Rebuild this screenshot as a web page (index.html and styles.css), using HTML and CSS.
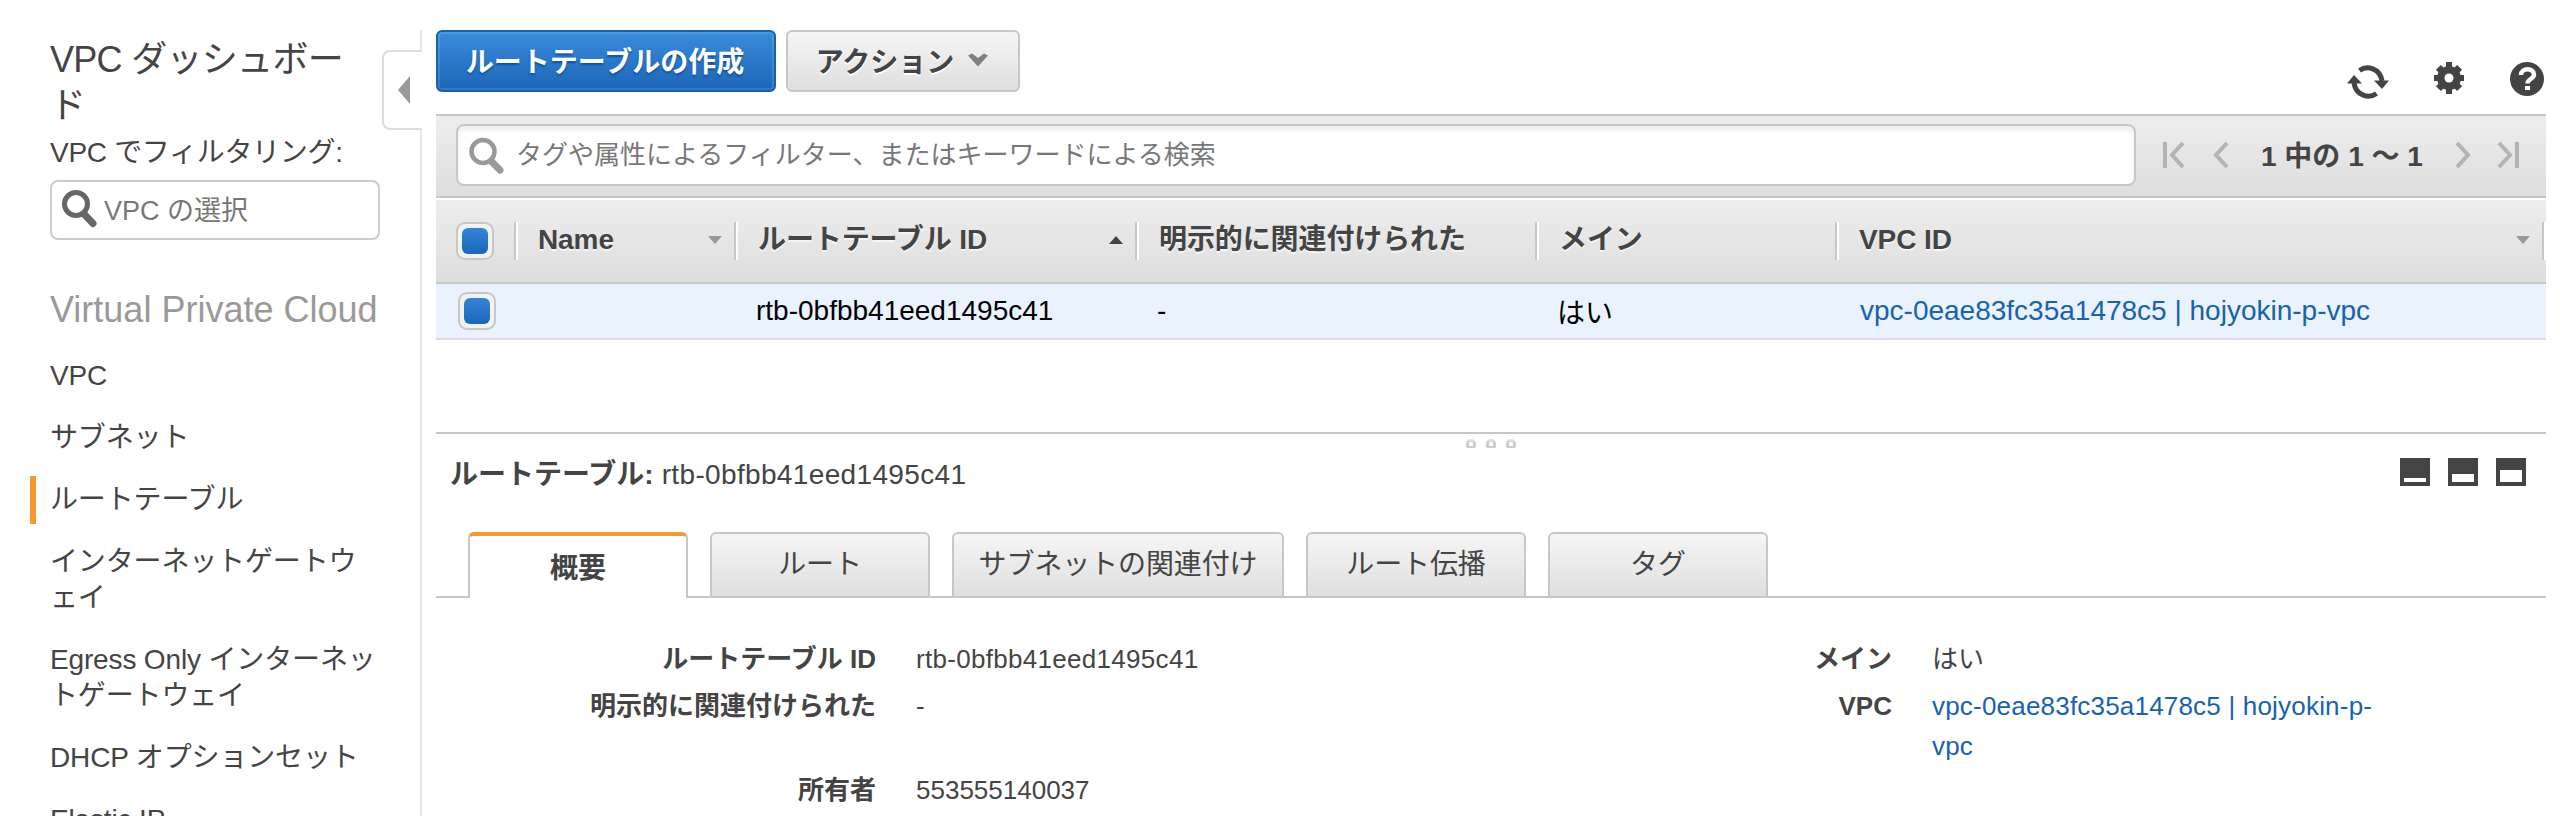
FILE: index.html
```html
<!DOCTYPE html>
<html lang="ja">

<head>
  <meta charset="UTF-8">
  <meta name="viewport" content="width=device-width, initial-scale=1.0">
  <title>VPC ダッシュボード</title>
  <link rel="stylesheet" href="styles.css">
</head>

<body>
  <nav class="sidebar">
    <h1>VPC ダッシュボー<br>ド</h1>
    <p class="filter-label">VPC でフィルタリング:</p>
    <div class="vpc-filter">
      <svg class="search-icon" width="36" height="42" viewBox="0 0 36 42">
        <circle cx="14" cy="15" r="11.5" fill="none" stroke="#666" stroke-width="5" />
        <path d="M22 25 L31 34.500" stroke="#666" stroke-width="7" stroke-linecap="round" />
      </svg>
      <span>VPC の選択</span>
    </div>
    <h2>Virtual Private Cloud</h2>
    <ul class="menu">
      <li>VPC</li>
      <li>サブネット</li>
      <li class="current">ルートテーブル</li>
      <li>インターネットゲートウ<br>ェイ</li>
      <li>Egress Only インターネッ<br>トゲートウェイ</li>
      <li>DHCP オプションセット</li>
      <li>Elastic IP</li>
    </ul>
    <div class="collapse"><svg width="12" height="28" viewBox="0 0 12 28"><path d="M12 0 L0 14 L12 28 Z" fill="#999" /></svg></div>
  </nav>

  <main class="content">
    <header class="actions">
      <button class="btn btn-primary">ルートテーブルの作成</button>
      <button class="btn btn-default">アクション
        <svg width="20" height="14" viewBox="0 0 20 14"><path d="M0 2.500 L4 0.500 L10 5 L16 0.500 L20 2.500 L10 13.500 Z" fill="#808080" /></svg>
      </button>
      <div class="tools">
        <svg class="icon-refresh" width="42" height="34" viewBox="0 0 42 34">
          <g fill="none" stroke="#444" stroke-width="5">
            <path d="M12.5 5.5 C20 0 33 3 35 16" />
            <path d="M29.5 28.5 C22 34 9 31 7 18" />
          </g>
          <path d="M27 15.5 L42 15.5 L35 24 Z M0 18.500 L7 10 L15 18.500 Z" fill="#444" />
        </svg>
        <svg class="icon-gear" width="32" height="32" viewBox="0 0 32 32">
          <g fill="#444">
            <rect x="13" y="0" width="6" height="32" />
            <rect x="12.500" y="1" width="7" height="30" transform="rotate(45 16 16)" />
            <rect x="13" y="1" width="6" height="30" transform="rotate(90 16 16)" />
            <rect x="12.500" y="1" width="7" height="30" transform="rotate(135 16 16)" />
            <circle cx="16" cy="16" r="12" />
          </g>
          <circle cx="16" cy="16" r="4.500" fill="#fff" />
        </svg>
        <svg class="icon-help" width="34" height="34" viewBox="0 0 34 34">
          <circle cx="17" cy="17" r="17" fill="#444" />
          <path d="M11 13 C11 5.500 24 5.500 24 12.500 C24 17 17.500 17 17.500 21.500" fill="none" stroke="#fff" stroke-width="4.500" />
          <rect x="15" y="24" width="5" height="4" fill="#fff" />
        </svg>
      </div>
    </header>

    <div class="toolbar">
      <div class="search">
        <svg class="search-icon" width="36" height="42" viewBox="0 0 36 42">
          <circle cx="14" cy="17.500" r="11.5" fill="none" stroke="#999" stroke-width="4.500" />
          <path d="M22 27 L31 36" stroke="#999" stroke-width="7" stroke-linecap="round" />
        </svg>
        <span>タグや属性によるフィルター、またはキーワードによる検索</span>
      </div>
      <div class="pager">
        <svg width="22" height="26" viewBox="0 0 22 26"><path d="M2 0 V26 M20 1 L9 13 L20 25" /></svg>
        <svg class="prev" width="16" height="26" viewBox="0 0 16 26"><path d="M14 1 L3 13 L14 25" /></svg>
        <span>1 中の 1 ～ 1</span>
        <svg class="next" width="16" height="26" viewBox="0 0 16 26"><path d="M2 1 L13 13 L2 25" /></svg>
        <svg class="last" width="22" height="26" viewBox="0 0 22 26"><path d="M20 0 V26 M2 1 L13 13 L2 25" /></svg>
      </div>
    </div>

    <div class="grid-row grid-head">
      <div class="cell"><i class="checkbox"></i></div>
      <div class="cell"><span>Name</span><i class="sort-down"></i></div>
      <div class="cell"><span>ルートテーブル ID</span><i class="sort-up"></i></div>
      <div class="cell"><span>明示的に関連付けられた</span></div>
      <div class="cell"><span>メイン</span></div>
      <div class="cell"><span>VPC ID</span><i class="sort-down"></i></div>
    </div>
    <div class="grid-row grid-item">
      <div class="cell"><i class="checkbox"></i></div>
      <div class="cell"></div>
      <div class="cell">rtb-0bfbb41eed1495c41</div>
      <div class="cell">-</div>
      <div class="cell">はい</div>
      <div class="cell"><a>vpc-0eae83fc35a1478c5 | hojyokin-p-vpc</a></div>
    </div>

    <section class="detail">
      <div class="splitter"><i></i><i></i><i></i></div>
      <div class="detail-title">
        <b>ルートテーブル:</b>
        <span>rtb-0bfbb41eed1495c41</span>
        <div class="views">
          <i class="view-small"></i>
          <i class="view-half"></i>
          <i class="view-full"></i>
        </div>
      </div>
      <div class="tabs">
        <div class="tab active">概要</div>
        <div class="tab">ルート</div>
        <div class="tab wide">サブネットの関連付け</div>
        <div class="tab">ルート伝播</div>
        <div class="tab">タグ</div>
      </div>
      <div class="summary">
        <dl class="summary-left">
          <dt>ルートテーブル ID</dt>
          <dd class="id">rtb-0bfbb41eed1495c41</dd>
          <dt>明示的に関連付けられた</dt>
          <dd>-</dd>
          <dt class="owner">所有者</dt>
          <dd class="owner">553555140037</dd>
        </dl>
        <dl class="summary-right">
          <dt>メイン</dt>
          <dd>はい</dd>
          <dt>VPC</dt>
          <dd class="link"><a>vpc-0eae83fc35a1478c5 | hojyokin-p-<br>vpc</a></dd>
        </dl>
      </div>
    </section>
  </main>
</body>

</html>
```
FILE: styles.css
```css
* {
  box-sizing: border-box;
}

body {
  display: flex;
  height: 816px;
  margin: 0;
  overflow: hidden;
  background-color: #fff;
  color: #444;
  font-family: "Liberation Sans", "Noto Sans CJK JP", sans-serif;
  font-size: 28px;
  white-space: nowrap;
}

h1,
h2,
p,
ul,
dl,
dd {
  margin: 0;
  padding: 0;
  font-weight: normal;
}

svg {
  display: block;
  flex: none;
}

i {
  display: block;
  flex: none;
}

a {
  color: #1862ad;
}

/* sidebar */
.sidebar {
  position: relative;
  flex: none;
  width: 422px;
  height: 786px;
  margin-top: 30px;
  padding-left: 50px;
  border-right: 2px solid #e7e7e7;
}

.sidebar h1 {
  padding-top: 7px;
  font-size: 36px;
  letter-spacing: -0.7px;
  line-height: 46px;
}

.filter-label {
  margin-top: 6px;
  letter-spacing: -0.3px;
  line-height: 36px;
}

.vpc-filter {
  display: flex;
  align-items: center;
  width: 330px;
  height: 60px;
  margin-top: 9px;
  padding-left: 10px;
  border: 2px solid #ccc;
  border-radius: 8px;
  color: #777;
  font-size: 27px;
}

.vpc-filter span {
  margin-left: 6px;
  padding-bottom: 4px;
}

.sidebar h2 {
  margin-top: 47px;
  color: #999;
  font-size: 36px;
  line-height: 46px;
}

.menu {
  margin-top: 12px;
  letter-spacing: -0.15px;
  list-style: none;
}

.menu li {
  padding: 13px 0;
  line-height: 36px;
}

.menu .current {
  position: relative;
}

.menu .current::before {
  content: "";
  position: absolute;
  left: -20px;
  top: 7px;
  width: 6px;
  height: 48px;
  background-color: #f8992e;
}

.collapse {
  position: absolute;
  top: 20px;
  right: -2px;
  display: flex;
  align-items: center;
  width: 40px;
  height: 80px;
  padding-left: 14px;
  border: 2px solid #ddd;
  border-right: none;
  border-radius: 8px 0 0 8px;
  background-color: #fff;
}

/* main column */
.content {
  width: 2110px;
  margin-left: 14px;
}

.actions {
  display: flex;
  height: 114px;
  padding-top: 30px;
}

.btn {
  display: flex;
  align-items: center;
  justify-content: center;
  height: 62px;
  padding: 0 2px 2px 0;
  border-radius: 6px;
  font-family: inherit;
  font-size: 28px;
  font-weight: bold;
}

.btn-primary {
  width: 340px;
  border: 2px solid #1862ad;
  background: linear-gradient(#3a8bdc, #1b66b7);
  box-shadow: inset 0 0 0 2px rgba(255, 255, 255, 0.12);
  color: #fff;
  text-shadow: 0 2px 2px #14518f;
}

.btn-default {
  width: 234px;
  margin-left: 10px;
  border: 2px solid #c7c7c7;
  background: linear-gradient(#f5f5f5, #dfdfdf);
  color: #444;
  text-shadow: 0 2px 0 #fff;
}

.btn-default svg {
  margin: -1px 0 0 14px;
}

.tools {
  display: flex;
  align-items: flex-start;
  margin: 32px 2px 0 auto;
}

.icon-refresh {
  margin-top: 3px;
}

.icon-gear {
  margin-left: 44px;
}

.icon-help {
  margin-left: 45px;
}

.toolbar {
  display: flex;
  align-items: center;
  height: 84px;
  padding: 0 27px 0 20px;
  border-top: 2px solid #c7c7c7;
  border-bottom: 2px solid #c7c7c7;
  background: linear-gradient(#ededed, #dedede);
}

.search {
  display: flex;
  align-items: center;
  width: 1680px;
  height: 62px;
  margin-bottom: 2px;
  padding-left: 11px;
  border: 2px solid #c7c7c7;
  border-radius: 8px;
  background-color: #fff;
  box-shadow: inset 0 4px 5px #eee;
  color: #777;
  font-size: 26px;
}

.search span {
  margin-left: 11px;
  padding-bottom: 6px;
}

.pager {
  display: flex;
  flex: 1;
  align-items: center;
  padding: 0 0 2px 27px;
  font-size: 28px;
  font-weight: bold;
}

.pager .prev {
  margin-left: 28px;
}

.pager span {
  width: 160px;
  margin-left: 32px;
  padding-bottom: 3px;
}

.pager .next {
  margin-left: 34px;
}

.pager .last {
  margin-left: 26px;
}

.pager path {
  fill: none;
  stroke: #b4b4b4;
  stroke-width: 4;
}

/* table */
.grid-row {
  display: grid;
  grid-template-columns: 82px 220px 401px 400px 300px 707px;
}

.grid-head {
  height: 84px;
  margin-top: 2px;
  padding: 22px 0;
  border-bottom: 2px solid #c7c7c7;
  background: linear-gradient(#ededed, #dedede);
  font-weight: bold;
  text-shadow: 0 2px 0 #f5f5f5;
}

.cell {
  display: flex;
  align-items: center;
  padding-left: 18px;
}

.cell:first-child {
  padding-left: 20px;
}

.grid-head .cell {
  height: 38px;
  padding-right: 14px;
  border-right: 2px solid #fff;
  box-shadow: inset -2px 0 0 #c7c7c7;
}

.grid-head .cell + .cell {
  padding-left: 20px;
}

.grid-head span {
  padding-bottom: 2px;
  letter-spacing: -0.1px;
  line-height: 36px;
}

.grid-item {
  height: 56px;
  border-bottom: 2px solid #dcdcdc;
  background-color: #e9f2fe;
  color: #000;
}

.grid-item .cell:first-child {
  padding-left: 22px;
}

.grid-item .cell:last-child {
  padding-left: 21px;
}

.checkbox {
  width: 38px;
  height: 38px;
  padding: 4px;
  border: 2px solid #c7c7c7;
  border-radius: 9px;
  background-color: #f2f2f2;
}

.checkbox::before {
  content: "";
  display: block;
  width: 26px;
  height: 26px;
  border-radius: 6px;
  background: linear-gradient(#3485d8, #1b66b7);
}

.sort-down,
.sort-up {
  margin: -3px 0 0 auto;
  border-right: 7.5px solid transparent;
  border-left: 7.5px solid transparent;
}

.sort-down {
  border-top: 8px solid #999;
}

.sort-up {
  border-bottom: 8px solid #444;
}

/* detail pane */
.detail {
  margin-top: 92px;
  border-top: 2px solid #c7c7c7;
}

.splitter {
  display: flex;
  justify-content: center;
  gap: 10px;
  height: 14px;
  padding-top: 5px;
}

.splitter i {
  width: 10px;
  height: 9px;
  border: 3px solid #ccc;
  border-top-color: #ddd;
  border-bottom-width: 2px;
  border-radius: 5px 5px 2px 2px;
}

.detail-title {
  display: flex;
  height: 84px;
  padding: 7px 20px 0 14px;
  line-height: 40px;
}

.detail-title span {
  margin-left: 8px;
  letter-spacing: 0.35px;
}

.views {
  display: flex;
  gap: 18px;
  margin: 3px 0 0 auto;
}

.views i {
  width: 30px;
  height: 28px;
  border: 4px solid #444;
  background-color: #fff;
}

.views .view-small {
  border-top-width: 20px;
}

.views .view-half {
  border-top-width: 16px;
}

.views .view-full {
  border-top-width: 12px;
}

.tabs {
  display: flex;
  gap: 22px;
  height: 66px;
  padding-left: 32px;
  border-bottom: 2px solid #c7c7c7;
}

.tab {
  display: flex;
  justify-content: center;
  width: 220px;
  height: 64px;
  padding-top: 11px;
  border: 2px solid #c7c7c7;
  border-bottom: none;
  border-radius: 6px 6px 0 0;
  background: linear-gradient(#f5f5f5, #dfdfdf);
  letter-spacing: -0.1px;
  line-height: 40px;
}

.tab.wide {
  width: 332px;
}

.tab.active {
  height: 66px;
  padding-top: 13px;
  border-top: 4px solid #f8992e;
  background: #fff;
  font-weight: bold;
}

.summary {
  display: flex;
  padding-top: 41px;
  font-size: 26px;
  line-height: 40px;
}

.summary dl {
  display: grid;
  grid-auto-rows: min-content;
  column-gap: 40px;
  row-gap: 7px;
}

.summary-left {
  grid-template-columns: 440px 836px;
}

.summary-right {
  grid-template-columns: 140px 460px;
}

.summary dt {
  font-weight: bold;
  text-align: right;
}

.summary .id {
  letter-spacing: 0.3px;
}

.summary .link {
  letter-spacing: 0.2px;
}

.summary .owner {
  margin-top: 37px;
}
```
